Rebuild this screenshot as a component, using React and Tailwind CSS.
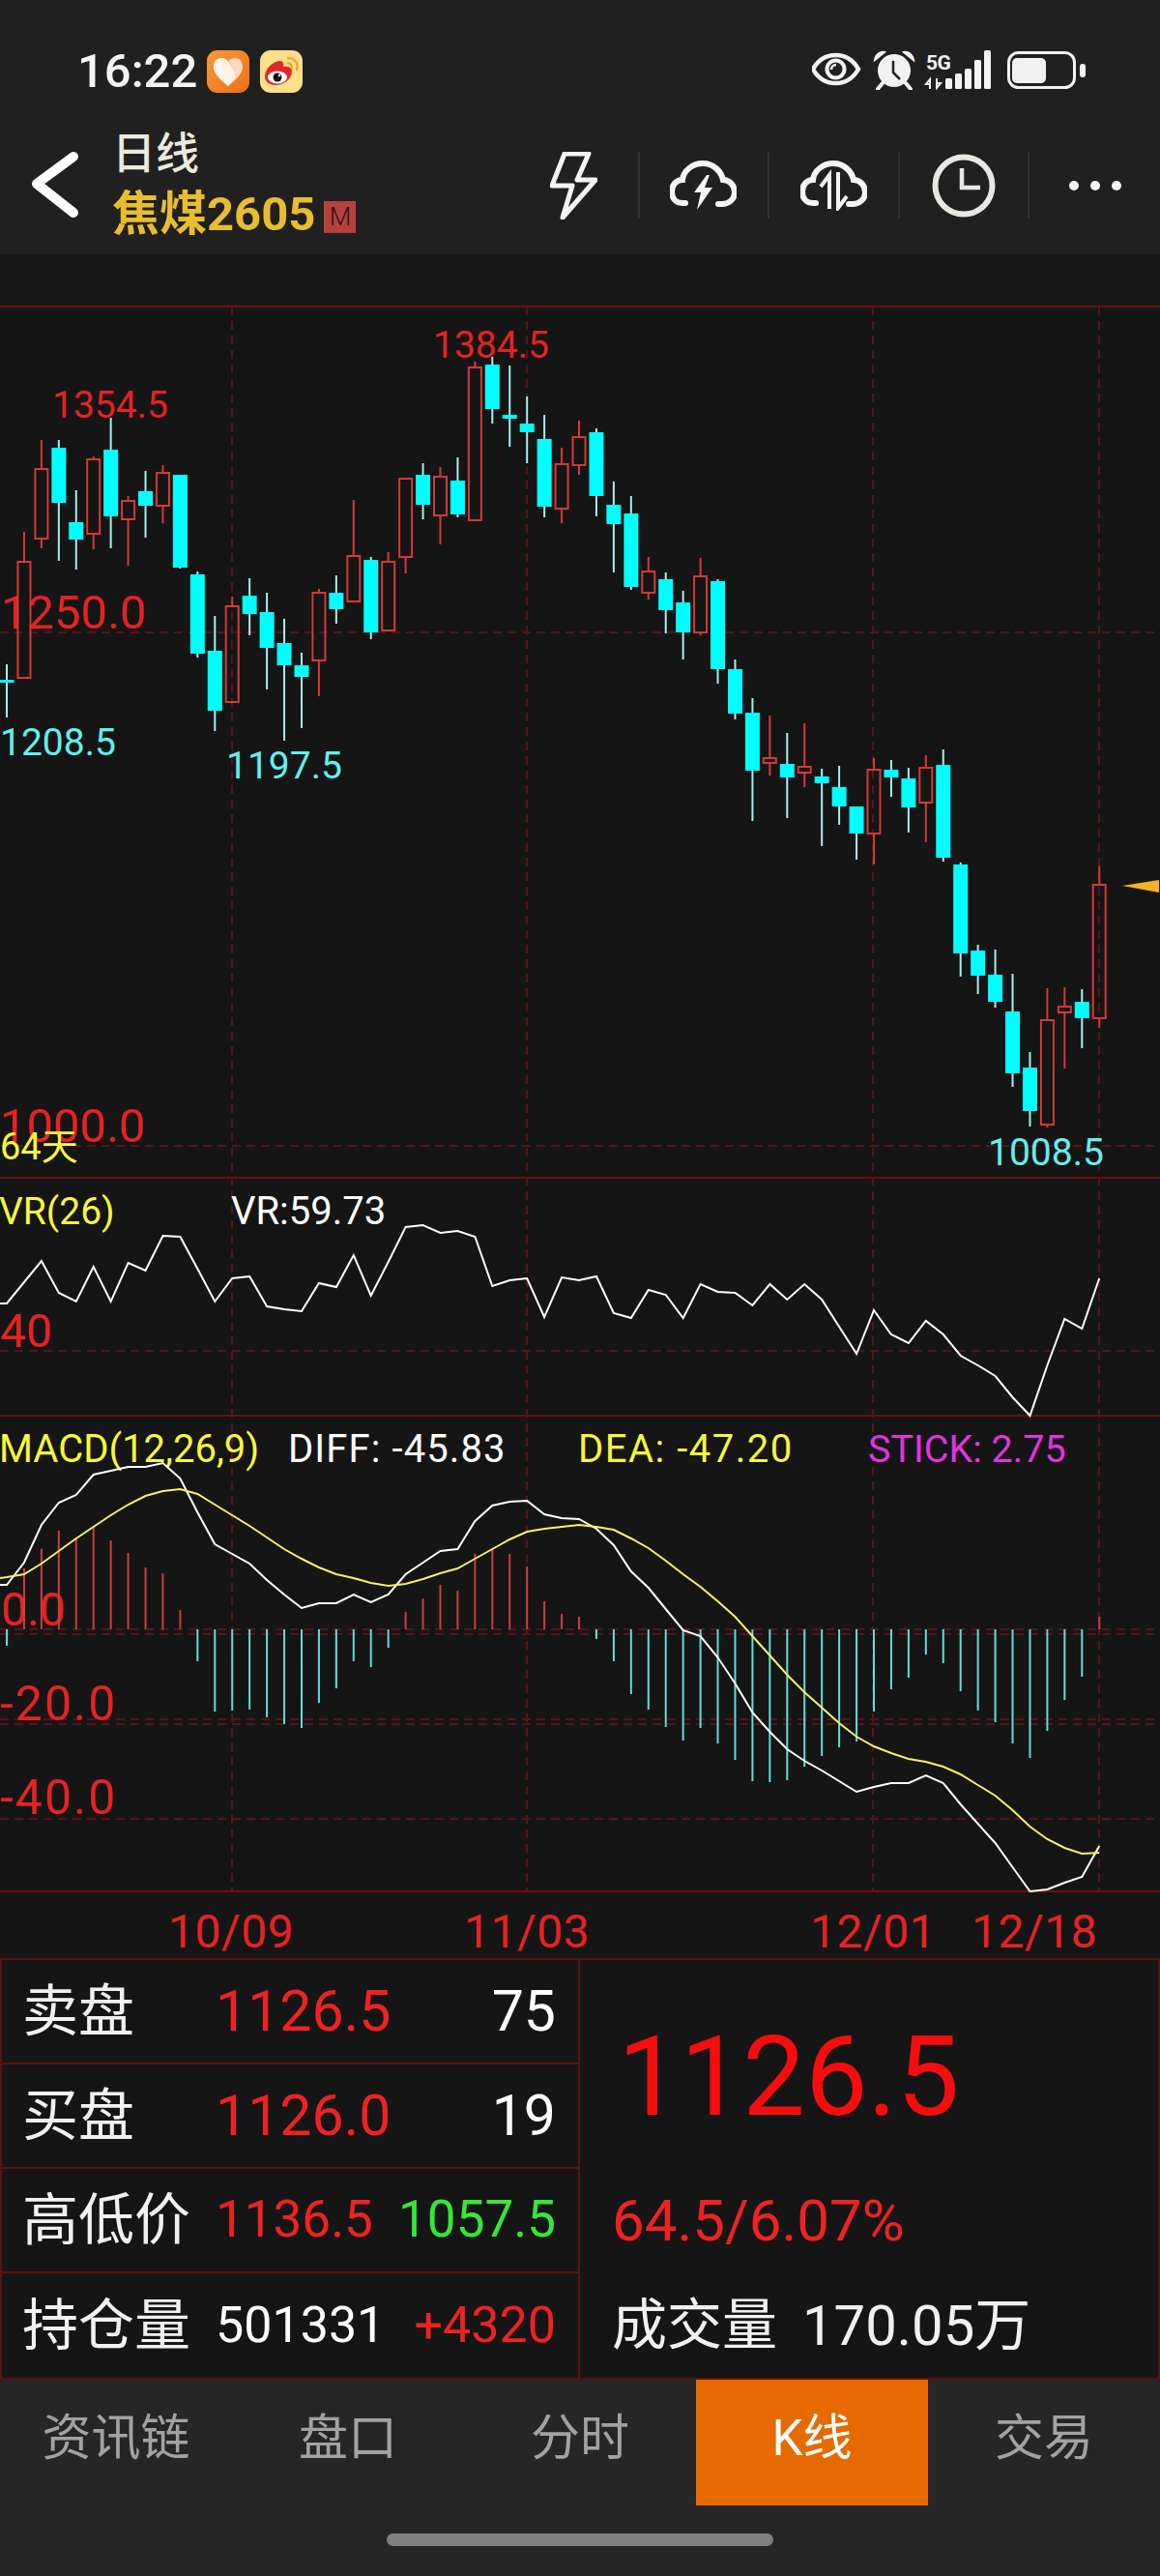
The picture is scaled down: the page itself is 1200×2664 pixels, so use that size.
const X = (i) => 7 + 17.94 * i

// [up, high, bodyTop, bodyBottom, low] in page px
const CANDLES = [
  [0, 688, 704, 707, 743], [1, 551, 582, 702, 702], [1, 456, 486, 558, 568], [0, 456, 464, 521, 581],
  [0, 508, 541, 559, 590], [1, 473, 476, 553, 569], [0, 433, 466, 535, 568], [1, 514, 519, 538, 586],
  [0, 488, 509, 524, 557], [1, 482, 490, 524, 542], [0, 492, 492, 588, 589], [0, 592, 595, 677, 681],
  [0, 638, 674, 736, 757], [1, 618, 628, 727, 727], [0, 599, 617, 636, 658], [0, 614, 634, 671, 714],
  [0, 641, 666, 689, 767], [0, 676, 689, 701, 754], [1, 610, 614, 684, 721], [0, 596, 614, 631, 646],
  [1, 518, 576, 623, 623], [0, 577, 580, 655, 662], [1, 572, 582, 653, 653], [1, 496, 496, 577, 594],
  [0, 480, 492, 523, 538], [1, 484, 494, 534, 564], [0, 474, 498, 533, 536], [1, 375, 381, 539, 539],
  [0, 370, 378, 424, 439], [0, 379, 430, 434, 463], [0, 411, 439, 448, 480], [0, 430, 455, 525, 536],
  [1, 464, 481, 527, 542], [1, 436, 453, 482, 492], [0, 444, 448, 514, 535], [0, 499, 523, 543, 593],
  [0, 514, 532, 608, 611], [1, 577, 592, 614, 621], [0, 593, 600, 632, 656], [0, 612, 624, 655, 683],
  [1, 578, 597, 655, 658], [0, 600, 602, 693, 708], [0, 683, 693, 739, 745], [0, 723, 738, 798, 850],
  [1, 741, 785, 790, 803], [0, 759, 791, 805, 847], [1, 749, 794, 800, 815], [0, 796, 804, 811, 876],
  [0, 793, 815, 835, 854], [0, 835, 835, 863, 890], [1, 785, 797, 863, 895], [0, 787, 797, 805, 825],
  [0, 795, 806, 836, 862], [1, 782, 795, 831, 872], [0, 776, 792, 888, 892], [0, 893, 895, 987, 1011],
  [0, 978, 984, 1010, 1029], [0, 983, 1009, 1037, 1043], [0, 1008, 1047, 1111, 1125], [0, 1089, 1105, 1150, 1166],
  [1, 1023, 1056, 1164, 1167], [1, 1022, 1042, 1048, 1106], [0, 1024, 1037, 1054, 1085], [1, 897, 916, 1054, 1064],
]

const VR = [
  1349, 1327, 1305, 1338, 1347, 1311, 1347, 1307, 1315, 1279, 1280, 1313, 1347, 1323, 1321, 1352,
  1355, 1357, 1328, 1332, 1299, 1341, 1306, 1270, 1268, 1276, 1274, 1280, 1331, 1325, 1323, 1363,
  1322, 1325, 1321, 1359, 1364, 1335, 1340, 1364, 1329, 1337, 1338, 1351, 1329, 1345, 1329, 1345,
  1373, 1401, 1356, 1381, 1390, 1367, 1381, 1403, 1413, 1424, 1446, 1465, 1413, 1365, 1375, 1323,
]

const DIFF = [
  1640, 1617, 1578, 1555, 1547, 1526, 1522, 1518, 1518, 1514, 1530, 1565, 1598, 1608, 1618, 1635,
  1650, 1664, 1659, 1659, 1650, 1658, 1650, 1629, 1617, 1605, 1603, 1574, 1558, 1554, 1553, 1567,
  1571, 1572, 1582, 1599, 1626, 1643, 1665, 1687, 1693, 1715, 1742, 1772, 1792, 1810, 1822, 1832,
  1843, 1854, 1849, 1845, 1845, 1837, 1845, 1867, 1887, 1907, 1932, 1957, 1955, 1948, 1942, 1910,
]

const DEA = [
  1632, 1629, 1618, 1605, 1592, 1580, 1568, 1557, 1548, 1543, 1541, 1546, 1557, 1568, 1579, 1591,
  1603, 1613, 1622, 1629, 1633, 1638, 1641, 1639, 1634, 1628, 1623, 1613, 1603, 1593, 1585, 1582,
  1580, 1578, 1580, 1583, 1592, 1602, 1615, 1629, 1642, 1657, 1673, 1693, 1713, 1733, 1751, 1767,
  1783, 1797, 1807, 1814, 1820, 1823, 1828, 1836, 1847, 1858, 1873, 1890, 1903, 1912, 1918, 1917,
]

// end of each MACD bar, zero line is at 1686
const STICK = [
  1703, 1623, 1603, 1584, 1592, 1580, 1594, 1607, 1622, 1628, 1666, 1719, 1771, 1770, 1769, 1777,
  1784, 1788, 1762, 1747, 1719, 1725, 1705, 1668, 1654, 1640, 1646, 1608, 1603, 1608, 1621, 1657,
  1670, 1673, 1696, 1719, 1753, 1769, 1787, 1801, 1788, 1804, 1821, 1843, 1844, 1842, 1828, 1817,
  1808, 1802, 1771, 1748, 1736, 1712, 1721, 1750, 1770, 1782, 1804, 1819, 1791, 1759, 1735, 1673,
]

const points = (arr, startY) => `0,${startY} ` + arr.map((y, i) => `${X(i).toFixed(1)},${y}`).join(' ')

const SOLID_Y = [318, 1219, 1465, 1957]
const DASH_Y = [655, 1186, 1398, 1686, 1691, 1779, 1784, 1882]
const DASH_X = [240, 545, 903, 1137]

function KChart() {
  return (
    <svg width="1200" height="1708" viewBox="0 318 1200 1708" className="block overflow-visible">
      {DASH_X.map((x) => (
        <line key={x} x1={x} x2={x} y1="318" y2="1957" stroke="#561616" strokeWidth="2" strokeDasharray="9 6" />
      ))}
      {DASH_Y.map((y) => (
        <line key={y} x1="0" x2="1200" y1={y} y2={y} stroke="#561616" strokeWidth="2" strokeDasharray="9 6" />
      ))}
      {SOLID_Y.map((y) => (
        <line key={y} x1="0" x2="1200" y1={y} y2={y} stroke="#6e0f0f" strokeWidth="2" />
      ))}

      <g className="fill-[#e62222]">
        <text x="1" y="651" className="text-[49px]">1250.0</text>
        <text x="0" y="1182" className="text-[49px]">1000.0</text>
        <text x="0" y="1394" className="text-[48px]">40</text>
        <text x="1" y="1682" className="text-[48px]">0.0</text>
        <text x="0" y="1780" className="text-[50px] tracking-[2px]">-20.0</text>
        <text x="0" y="1877" className="text-[50px] tracking-[2px]">-40.0</text>
        <text x="54" y="433" className="text-[39px]">1354.5</text>
        <text x="448" y="371" className="text-[39px]">1384.5</text>
        <text x="174" y="2015" className="text-[48px] tracking-[0.5px]">10/09</text>
        <text x="480" y="2015" className="text-[48px] tracking-[0.5px]">11/03</text>
        <text x="838" y="2015" className="text-[48px] tracking-[0.5px]">12/01</text>
        <text x="1005" y="2015" className="text-[48px] tracking-[0.5px]">12/18</text>
      </g>
      <g className="fill-[#62f0f0] text-[39px]">
        <text x="0" y="782">1208.5</text>
        <text x="234" y="806">1197.5</text>
        <text x="1022" y="1206">1008.5</text>
      </g>
      <text x="0" y="1200" className="fill-[#f7f73c] text-[38px]">64天</text>
      <g className="text-[40px]">
        <text x="-1" y="1267" className="fill-[#f7f73c] text-[39px]">VR(26)</text>
        <text x="239" y="1267" className="fill-white">VR:59.73</text>
        <text x="-1" y="1513" className="fill-[#f7f73c]">MACD(12,26,9)</text>
        <text x="298" y="1513" className="fill-white tracking-[1.1px]">DIFF: -45.83</text>
        <text x="598" y="1513" className="fill-[#f7f73c] tracking-[1.5px]">DEA: -47.20</text>
        <text x="898" y="1513" className="fill-[#e233e2] text-[39.500px]">STICK: 2.75</text>
      </g>

      {CANDLES.map(([up, hi, top, bot, lo], i) => {
        const x = X(i)
        return up ? (
          <g key={i} stroke="#d33a36" strokeWidth="2" fill="none">
            <line x1={x} x2={x} y1={hi} y2={top} />
            <line x1={x} x2={x} y1={bot} y2={lo} />
            <rect x={x - 6.5} y={top} width="13" height={bot - top} />
          </g>
        ) : (
          <g key={i}>
            <line x1={x} x2={x} y1={hi} y2={lo} stroke="#a5f0f2" strokeWidth="2" />
            <rect x={x - 7.5} y={top} width="15" height={Math.max(bot - top, 3)} fill="#00ffff" />
          </g>
        )
      })}
      <polygon points="1161,917 1199,911 1199,924" fill="#f7b21d" />

      <polyline points={points(VR, 1349)} fill="none" stroke="#fff" strokeWidth="2" />

      {STICK.map((y, i) => (
        <line key={i} x1={X(i)} x2={X(i)} y1="1686" y2={y} stroke={y < 1686 ? '#c8403c' : '#62dcdc'} strokeWidth="2" />
      ))}
      <polyline points={points(DIFF, 1640)} fill="none" stroke="#fff" strokeWidth="2" />
      <polyline points={points(DEA, 1633)} fill="none" stroke="#f5f06a" strokeWidth="2" />
    </svg>
  )
}

function HeartTile() {
  return (
    <svg width="44" height="44" viewBox="0 0 44 44">
      <defs>
        <linearGradient id="tile" x1="0" y1="0" x2="1" y2="1">
          <stop offset="0" stopColor="#f89a3c" />
          <stop offset="1" stopColor="#ee6f14" />
        </linearGradient>
      </defs>
      <rect width="44" height="44" rx="11" fill="url(#tile)" />
      <path d="M22 37 C15 31 7 25 7 17 C7 11 11 8 15 8 C18 8 20.500 9.500 22 12 C23.500 9.500 26 8 29 8 C33 8 37 11 37 17 C37 25 29 31 22 37Z" fill="#fbd9c0" />
      <path d="M22 37 C15 31 7 25 7 17 C7 11 11 8 15 8 C19 8 22 11 24 15 L30 27 C27 31 25 34 22 37Z" fill="#fff3ea" />
    </svg>
  )
}

function WeiboTile() {
  return (
    <svg width="44" height="44" viewBox="0 0 44 44">
      <rect width="44" height="44" rx="11" fill="#fbe08a" />
      <path d="M29 8 A9 9 0 0 1 38 20 M29 13 A5 5 0 0 1 33 19" fill="none" stroke="#f0a63a" strokeWidth="2.500" strokeLinecap="round" />
      <path d="M5 27 C5 20 12 12 20 11 C24 10.500 25 14 24 17 C28 16 33 17 33 22 C33 30 24 36 16 36 C9 36 5 32 5 27Z" fill="#e0282a" />
      <ellipse cx="18" cy="28" rx="10" ry="6.500" fill="#fff" />
      <circle cx="18" cy="28" r="4.500" fill="#111" />
      <circle cx="20" cy="26" r="1.300" fill="#fff" />
    </svg>
  )
}

function StatusIcons() {
  return (
    <svg width="283" height="41" viewBox="840 53 283 41" className="block">
      <path d="M841 72.500 C847 62 855 58 864.500 58 C874 58 882 62 888 72.500 C882 83 874 87 864.500 87 C855 87 847 83 841 72.500Z" fill="none" stroke="#f2f2f2" strokeWidth="4.500" />
      <circle cx="864.500" cy="72.500" r="9" fill="none" stroke="#f2f2f2" strokeWidth="4" />
      <path d="M860 73 A5 5 0 0 1 865 68" fill="none" stroke="#f2f2f2" strokeWidth="2.500" />

      <circle cx="925" cy="74" r="17" fill="#f2f2f2" />
      <path d="M905 63 C906 57 911 54 915 55 Z M945 63 C944 57 939 54 935 55 Z" fill="#f2f2f2" stroke="#f2f2f2" strokeWidth="2" />
      <path d="M913 87 L908 93 M937 87 L942 93" stroke="#f2f2f2" strokeWidth="4" strokeLinecap="round" />
      <path d="M924 64 V76 L931 83" fill="none" stroke="#222" strokeWidth="2.500" />

      <text x="958" y="73" className="fill-[#f2f2f2] text-[21px] font-bold tracking-[-0.5px]">5G</text>
      <path d="M962 93 V83 L958 88 H962 M969 82 V92 L973 87 H969" fill="none" stroke="#f2f2f2" strokeWidth="2" />
      <rect x="978" y="82" width="7" height="11" rx="1.500" fill="#f2f2f2" />
      <rect x="988" y="77" width="7" height="16" rx="1.500" fill="#f2f2f2" />
      <rect x="998" y="72" width="7" height="21" rx="1.500" fill="#f2f2f2" />
      <rect x="1008" y="63" width="7" height="30" rx="1.500" fill="#f2f2f2" />
      <rect x="1018" y="53" width="7" height="40" rx="1.500" fill="#f2f2f2" />

      <rect x="1043.500" y="55.500" width="68" height="36" rx="10" fill="none" stroke="#f2f2f2" strokeWidth="3" />
      <rect x="1047" y="61" width="35" height="26" rx="5" fill="#f2f2f2" />
      <rect x="1117" y="67" width="6" height="14" rx="3" fill="#f2f2f2" />
    </svg>
  )
}

const CLOUD = 'M16 44 H13 C5 44 2 38 2 32 C2 25 7 20 13 20 C14 10 24 3 34 3 C45 3 53 11 55 20 C62 20 67 26 67 33 C67 40 61 45 54 45 H50'

const NAV_ICONS = [
  <svg key="bolt" width="49" height="70" viewBox="570 157 49 70">
    <path d="M585 159 H610 L598 186 H617 L583 225 L593 192 H572Z" fill="none" stroke="#f4f4f4" strokeWidth="5" strokeLinejoin="round" />
  </svg>,
  <svg key="cloud-bolt" width="69" height="52" viewBox="0 0 69 52">
    <path d={CLOUD} fill="none" stroke="#f4f4f4" strokeWidth="6" strokeLinecap="round" />
    <path d="M38 15 L25 33 H32 L28 51 L44 28 H36 L41 15Z" fill="#f4f4f4" />
  </svg>,
  <svg key="cloud-sync" width="69" height="52" viewBox="0 0 69 52">
    <path d={CLOUD} fill="none" stroke="#f4f4f4" strokeWidth="6" strokeLinecap="round" />
    <path d="M30 50 V15 L21 27 M39 12 V49 L48 37" fill="none" stroke="#f4f4f4" strokeWidth="4" />
  </svg>,
  <svg key="clock" width="66" height="66" viewBox="0 0 66 66">
    <circle cx="33" cy="33" r="29.500" fill="none" stroke="#e8e8e2" strokeWidth="6" />
    <path d="M31 15 V35 H50" fill="none" stroke="#e8e8e2" strokeWidth="4.500" />
  </svg>,
  <svg key="more" width="56" height="12" viewBox="0 0 56 12">
    <circle cx="6" cy="6" r="5" fill="#f4f4f4" />
    <circle cx="28" cy="6" r="5" fill="#f4f4f4" />
    <circle cx="50" cy="6" r="5" fill="#f4f4f4" />
  </svg>,
]

function Quote({ label, left, right, rowClass = 'text-[59px]', last }) {
  return (
    <div className={`flex h-[108px] items-center pl-[21px] pr-[23px] ${last ? '' : 'border-b-2 border-[#5e1212]'}`}>
      <span className="w-[200px] text-[58px] text-[#f0f0f0]">{label}</span>
      <span className={`flex flex-1 justify-between ${rowClass}`}>
        {left}
        {right}
      </span>
    </div>
  )
}

export default function App() {
  return (
    <div className="flex h-[2664px] w-[1200px] flex-col overflow-hidden bg-[#151515] font-['Roboto','Noto_Sans_CJK_SC',sans-serif]">
      <header className="bg-[#202020]">
        <div className="flex h-[122px] items-start justify-between pl-[80px] pr-[77px] pt-[52px]">
          <div className="flex items-center">
            <span className="w-[134px] text-[49px] leading-[44px] font-medium text-[#f4f4f4]">16:22</span>
            <div className="flex gap-[11px]">
              <HeartTile />
              <WeiboTile />
            </div>
          </div>
          <StatusIcons />
        </div>
        <div className="flex h-[141px] items-start justify-between pt-[10px]">
          <div className="flex">
            <svg width="60" height="72" viewBox="0 0 60 72" className="ml-[28px] mt-[24px]">
              <polyline points="48,6 10,34 48,64" fill="none" stroke="#fff" strokeWidth="10" strokeLinecap="round" strokeLinejoin="round" />
            </svg>
            <div className="ml-[28px]">
              <div className="mt-[3px] text-[45px] leading-[50px] font-medium text-[#ece9e0]">日线</div>
              <div className="mt-[9px] flex items-center">
                <span className="text-[49px] leading-[56px] font-bold text-[#e8bd30]">焦煤2605</span>
                <span className="ml-[9px] mt-[4px] flex h-[33px] w-[33px] items-center justify-center bg-[#b8403f] text-[26px] font-light text-[#2a1212]">M</span>
              </div>
            </div>
          </div>
          <div className="mt-[25px] grid w-[673px] grid-cols-5">
            {NAV_ICONS.map((icon, i) => (
              <div key={i} className={`flex h-[69px] items-center justify-center ${i < 4 ? 'border-r-2 border-[#333333]' : ''}`}>
                {icon}
              </div>
            ))}
          </div>
        </div>
      </header>

      <div className="h-[54px] bg-[#181818]" />

      <KChart />

      <section className="grid grid-cols-[598px_1fr] border-x-2 border-t-2 border-[#5e1212]">
        <div className="border-r-2 border-[#5e1212]">
          <Quote label="卖盘" left={<span className="text-[#ef2222]">1126.5</span>} right={<span className="text-white">75</span>} />
          <Quote label="买盘" left={<span className="text-[#ef2222]">1126.0</span>} right={<span className="text-white">19</span>} />
          <Quote label="高低价" rowClass="text-[53px]" left={<span className="text-[#ef2222]">1136.5</span>} right={<span className="text-[#35e835]">1057.5</span>} />
          <Quote label="持仓量" rowClass="text-[52px]" last left={<span className="text-white">501331</span>} right={<span className="text-[#ef2222]">+4320</span>} />
        </div>
        <div className="flex flex-col">
          <div className="flex h-[216px] items-center pl-[39px] pt-[24px] text-[115px] leading-none text-[#f50d0d]">1126.5</div>
          <div className="flex h-[108px] items-center pl-[33px] text-[60px] text-[#ef2222]">64.5/6.07%</div>
          <div className="flex h-[108px] items-center pl-[33px] text-[57px] text-[#f0f0f0]">
            <span>成交量</span>
            <span className="ml-[26px] text-[58px]">170.05万</span>
          </div>
        </div>
      </section>

      <nav className="flex-1 border-t-2 border-[#5e1212] bg-[#262626]">
        <div className="grid h-[130px] grid-cols-5 text-[51px] text-[#a2a2a2]">
          <div className="flex items-center justify-center pb-[8px]">资讯链</div>
          <div className="flex items-center justify-center pb-[8px]">盘口</div>
          <div className="flex items-center justify-center pb-[8px]">分时</div>
          <div className="flex items-center justify-center bg-[#e76a00] pb-[8px] text-white">K线</div>
          <div className="flex items-center justify-center pb-[8px]">交易</div>
        </div>
        <div className="mx-auto mt-[29px] h-[13px] w-[400px] rounded-full bg-[#808080]" />
      </nav>
    </div>
  )
}
